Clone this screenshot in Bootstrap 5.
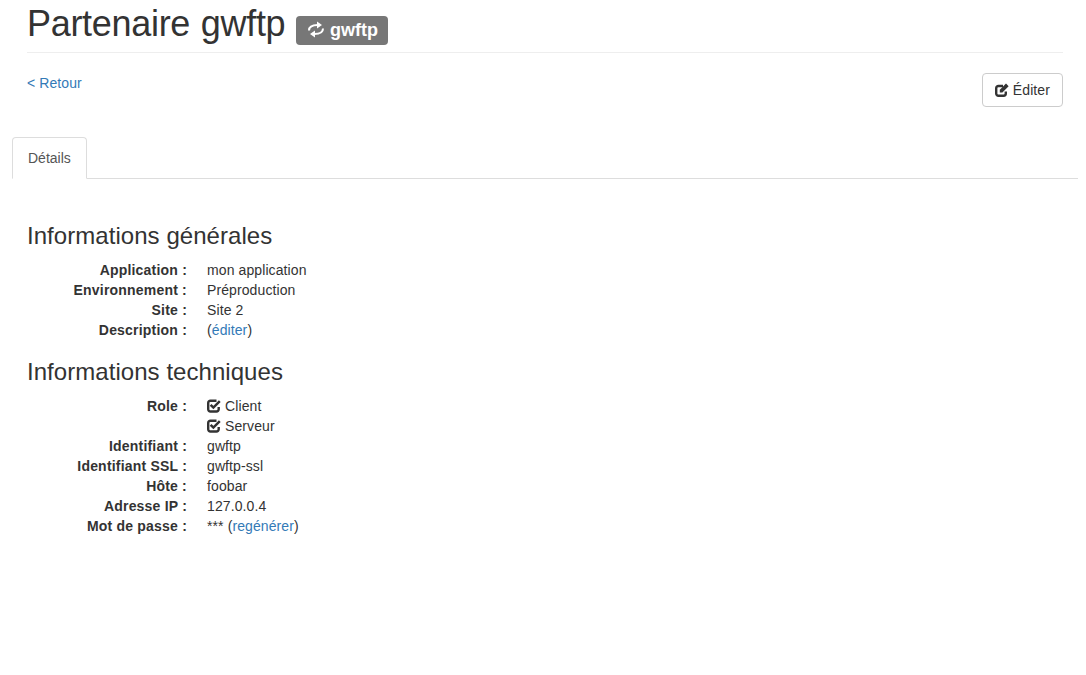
<!DOCTYPE html>
<html lang="fr">
<head>
<meta charset="utf-8">
<title>Partenaire gwftp</title>
<link href="https://cdn.jsdelivr.net/npm/bootstrap@5.3.0/dist/css/bootstrap.min.css" rel="stylesheet">
<style>
body{font-family:"Liberation Sans",Arial,sans-serif;font-size:14px;line-height:20px;color:#333;background:#fff;overflow:hidden;letter-spacing:.1px}
a{color:#337ab7;text-decoration:none}
.page-shell{width:1078px;padding-left:12px}
.head-block{margin:0 15px 0 15px;border-bottom:1px solid #eee;height:53px}
.head-title{font-size:36px;line-height:40px;font-weight:500;margin:0;padding-top:4px;color:#333;font-family:inherit;letter-spacing:-.3px;word-spacing:1px}
.head-tag{display:inline-flex;align-items:center;gap:5px;background:#777;color:#fff;font-size:18px;line-height:18px;font-weight:700;padding:5px 10px 6px 11px;border-radius:4px;margin-left:0;position:relative;top:2px;letter-spacing:0;word-spacing:0}
.tool-row{margin:20px 15px 0 15px;height:64px}
.edit-btn{--bs-btn-font-size:14px;--bs-btn-color:#333;--bs-btn-border-color:#ccc;--bs-btn-hover-color:#333;--bs-btn-hover-bg:#e6e6e6;--bs-btn-hover-border-color:#adadad;--bs-btn-padding-x:12px;--bs-btn-padding-y:6px;--bs-btn-border-radius:4px;--bs-btn-line-height:20px;display:flex;align-items:center;gap:4px;height:34px}
.tab-bar{--bs-nav-tabs-border-color:#ddd;--bs-nav-tabs-border-radius:4px;--bs-nav-link-padding-x:15px;--bs-nav-link-padding-y:10px;--bs-nav-link-font-size:14px;--bs-nav-tabs-link-active-color:#555;--bs-nav-tabs-link-active-border-color:#ddd #ddd #fff;height:42px}
.tab-bar .nav-link{line-height:20px;height:42px;letter-spacing:0}
.pane-body{margin-left:15px;padding-top:44px}
.group-title{font-size:24px;line-height:26px;font-weight:500;margin:0 0 11px;font-family:inherit;color:#333;letter-spacing:.05px}
.info-grid{display:grid;grid-template-columns:160px 1fr;column-gap:20px;margin:0 0 19px}
.info-grid dt{grid-column:1;text-align:right;font-weight:700;margin:0;letter-spacing:.2px}
.info-grid dd{grid-column:2;margin:0;display:flex;align-items:center;gap:4px}
.info-grid dd.plain{display:block}
.ico-fa{flex:none;display:block}
</style>
</head>
<body>
<div class="page-shell">
  <div class="head-block">
    <h1 class="head-title">Partenaire gwftp <span class="head-tag"><svg class="ico-fa" width="18" height="17" viewBox="0 0 18 17" fill="none" stroke="#fff" stroke-width="2"><path d="M2 9.5 C2 5.5 4.5 4 10.5 4"/><path d="M16 7.5 C16 11.5 13.5 13 7.5 13"/><path d="M10 .5 L15 4 L10 7.5 Z M8 9.5 L3 13 L8 16.5 Z" fill="#fff" stroke="none"/></svg>gwftp</span></h1>
  </div>
  <div class="tool-row d-flex justify-content-between align-items-start">
    <a href="#">&lt; Retour</a>
    <a href="#" class="btn edit-btn"><svg class="ico-fa" width="14" height="14" viewBox="0 0 14 14" fill="none"><path d="M10.8 8.5V10.5A2.2 2.2 0 0 1 8.6 12.7H3.4A2.2 2.2 0 0 1 1.2 10.5V5.2A2.2 2.2 0 0 1 3.4 3H8" stroke="#333" stroke-width="2.4"/><path d="M4.8 6.8 L4.8 9.4 L7.4 9.4 L13.6 3.2 L11 .6 Z" fill="#333"/></svg>Éditer</a>
  </div>
  <ul class="nav nav-tabs tab-bar">
    <li class="nav-item"><a class="nav-link active" href="#">Détails</a></li>
  </ul>
  <div class="pane-body">
    <h3 class="group-title">Informations générales</h3>
    <dl class="info-grid">
      <dt>Application :</dt><dd>mon application</dd>
      <dt>Environnement :</dt><dd>Préproduction</dd>
      <dt>Site :</dt><dd>Site 2</dd>
      <dt>Description :</dt><dd class="plain">(<a href="#">éditer</a>)</dd>
    </dl>
    <h3 class="group-title">Informations techniques</h3>
    <dl class="info-grid">
      <dt>Role :</dt><dd><svg class="ico-fa" width="14" height="14" viewBox="0 0 14 14" fill="none"><path d="M11.7 8V10.3A2.2 2.2 0 0 1 9.5 12.5H3.4A2.2 2.2 0 0 1 1.2 10.3V4A2.2 2.2 0 0 1 3.4 1.8H9.5" stroke="#333" stroke-width="2.4"/><path d="M3.6 5.8 L6.4 8.6 L12.8 2.2" stroke="#333" stroke-width="2.5"/></svg>Client</dd>
      <dt></dt><dd><svg class="ico-fa" width="14" height="14" viewBox="0 0 14 14" fill="none"><path d="M11.7 8V10.3A2.2 2.2 0 0 1 9.5 12.5H3.4A2.2 2.2 0 0 1 1.2 10.3V4A2.2 2.2 0 0 1 3.4 1.8H9.5" stroke="#333" stroke-width="2.4"/><path d="M3.6 5.8 L6.4 8.6 L12.8 2.2" stroke="#333" stroke-width="2.5"/></svg>Serveur</dd>
      <dt>Identifiant :</dt><dd>gwftp</dd>
      <dt>Identifiant SSL :</dt><dd>gwftp-ssl</dd>
      <dt>Hôte :</dt><dd>foobar</dd>
      <dt>Adresse IP :</dt><dd>127.0.0.4</dd>
      <dt>Mot de passe :</dt><dd class="plain">*** (<a href="#">regénérer</a>)</dd>
    </dl>
  </div>
</div>
<script src="https://cdn.jsdelivr.net/npm/bootstrap@5.3.0/dist/js/bootstrap.bundle.min.js"></script>
</body>
</html>
